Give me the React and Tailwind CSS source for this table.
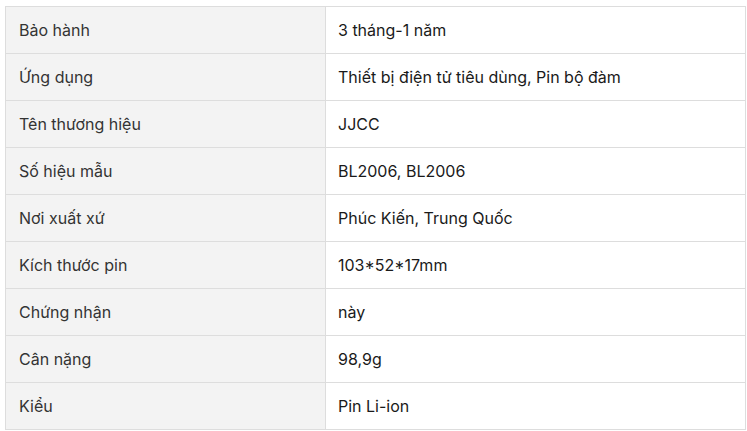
import React from "react";

const rows = [
  ["Bảo hành", "3 tháng-1 năm"],
  ["Ứng dụng", "Thiết bị điện tử tiêu dùng, Pin bộ đàm"],
  ["Tên thương hiệu", "JJCC"],
  ["Số hiệu mẫu", "BL2006, BL2006"],
  ["Nơi xuất xứ", "Phúc Kiến, Trung Quốc"],
  ["Kích thước pin", "103*52*17mm"],
  ["Chứng nhận", "này"],
  ["Cân nặng", "98,9g"],
  ["Kiểu", "Pin Li-ion"],
];

export default function App() {
  return (
    <div className="bg-white w-[747px] h-[431px] pt-[6px] pl-[5px]" style={{ fontFamily: "Inter, 'Noto Sans', sans-serif" }}>
      <table className="border-collapse w-[741px] text-[16px] leading-[20px]">
        <tbody>
          {rows.map(([k, v]) => (
            <tr key={k} className="h-[47px]">
              <td className="w-[320px] border border-[#dddddd] bg-[#f3f3f3] pl-[13px] text-[#333333] align-middle p-0">{k}</td>
              <td className="border border-[#dddddd] bg-white pl-[12px] text-[#1a1a1a] align-middle p-0">{v}</td>
            </tr>
          ))}
        </tbody>
      </table>
    </div>
  );
}
